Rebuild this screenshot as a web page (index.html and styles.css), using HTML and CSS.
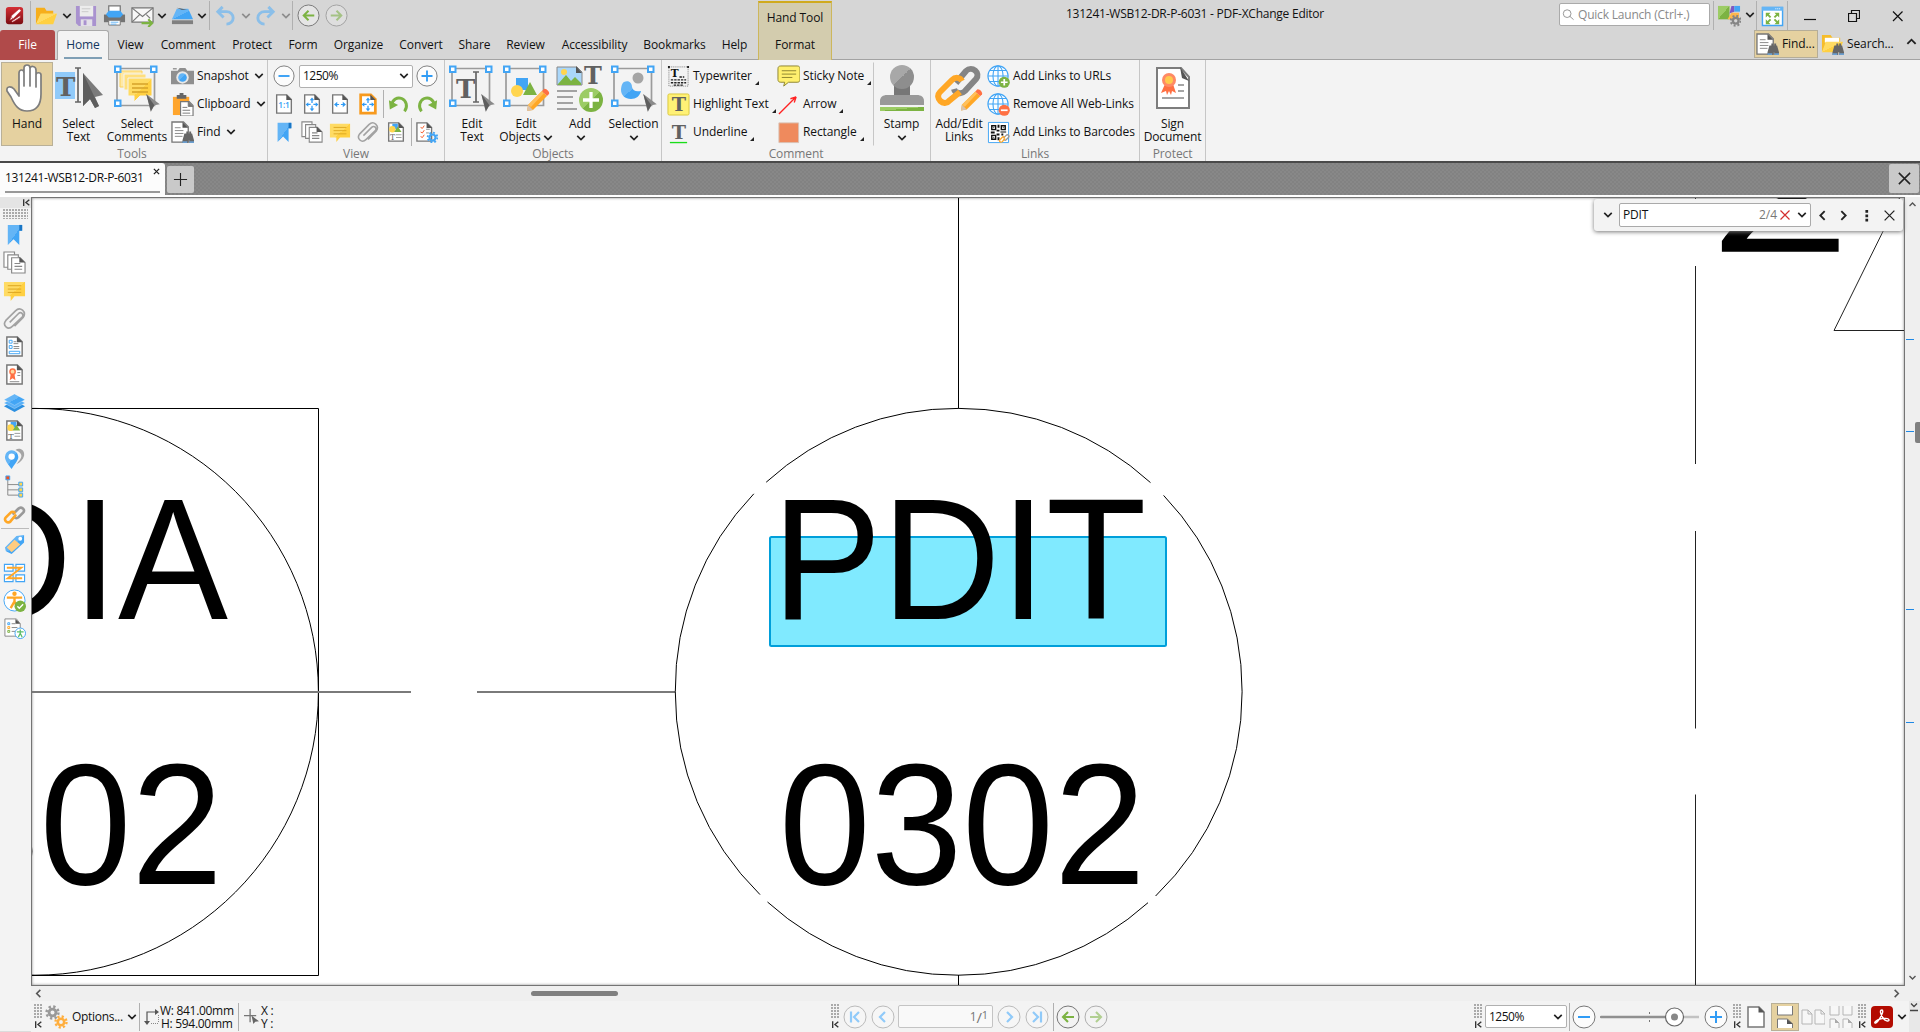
FILE: index.html
```html
<!DOCTYPE html>
<html lang="en">
<head>
<meta charset="utf-8">
<title>131241-WSB12-DR-P-6031 - PDF-XChange Editor</title>
<link rel="stylesheet" href="styles.css">
</head>
<body>
<svg class="defs" aria-hidden="true">
<defs>
<linearGradient id="gblue" x1="0" y1="0" x2="1" y2="1"><stop offset=".5" stop-color="#64b5f6"/><stop offset=".5" stop-color="#42a5f5"/></linearGradient>
<linearGradient id="gyel" x1="0" y1="0" x2="1" y2="1"><stop offset=".5" stop-color="#ffdb63"/><stop offset=".5" stop-color="#ffd042"/></linearGradient>
<linearGradient id="gred" x1="0" y1="0" x2="0" y2="1"><stop offset="0" stop-color="#d62f35"/><stop offset="1" stop-color="#7b0d12"/></linearGradient>
<linearGradient id="ggray" x1="0" y1="0" x2="1" y2="1"><stop offset=".5" stop-color="#a8a8a8"/><stop offset=".5" stop-color="#8e8e8e"/></linearGradient>
<linearGradient id="ggreen" x1="0" y1="0" x2="1" y2="1"><stop offset=".5" stop-color="#9ccc65"/><stop offset=".5" stop-color="#7cb342"/></linearGradient>
<symbol id="chev" viewBox="0 0 8 8"><path d="M1 2.300l3 3 3-3" fill="none" stroke="currentColor" stroke-width="1.350"/></symbol>
<symbol id="page" viewBox="0 0 24 24"><path d="M4 2h11l5 5v15H4z" fill="#fff" stroke="#777" stroke-width="1.500"/><path d="M14.500 1.500v6h6z" fill="#555"/></symbol>
<symbol id="bino" viewBox="0 0 24 24"><path d="M12 20l2-7h2v-2h2v2h1v-2h2v2h1l2 7v3h-5v-3h-1v3h-6z" fill="#666"/><path d="M12 21h5v2h-5zM19 21h5v2h-5z" fill="#6b9fd0"/></symbol>
<symbol id="app" viewBox="0 0 24 24"><rect x="3" y="3" width="18" height="18" rx="3" fill="url(#gred)"/><path d="M7 17l2-5 8-7 2 2-8 8zM9 18l9-6v2l-8 5zM8 13l3 3" fill="#fff" stroke="#b3262b" stroke-width=".6"/></symbol>
<symbol id="folder" viewBox="0 0 24 24"><path d="M1 21V4h9l2 3h7v4H6z" fill="#f6ae1b"/><path d="M1 21l5-11h17l-4 11z" fill="url(#gyel)"/></symbol>
<symbol id="save" viewBox="0 0 24 24"><path d="M1 2h21v21H4l-3-3z" fill="#a992cf"/><path d="M5 2h14v11H5z" fill="#ececec"/><path d="M6 16h12v7H6z" fill="#e3e0e8"/><path d="M9 17h3v5H9z" fill="#a992cf"/><path d="M7 5h9M7 8h7" stroke="#c9c9c9"/></symbol>
<symbol id="print" viewBox="0 0 24 24"><path d="M6 9V2h12v7" fill="#fff" stroke="#777" stroke-width="1.300"/><path d="M1 11h22v8H1z" fill="#737373"/><path d="M3 11l3-4h12l3 4-3 3H6z" fill="#42a5f5"/><path d="M6 17h12v5H6z" fill="#fff" stroke="#777"/><path d="M8 19h8M8 21h6" stroke="#64b5f6"/></symbol>
<symbol id="mail" viewBox="0 0 24 24"><path d="M1 4h22v15H1z" fill="#f7f7f7" stroke="#777" stroke-width="1.300"/><path d="M1 4l11 9L23 4M1 19l8-8M16 11l4 4" fill="none" stroke="#777" stroke-width="1.200"/><path d="M11 20h10M18 16l4 4-4 4" fill="none" stroke="#7cb342" stroke-width="2.200"/></symbol>
<symbol id="scan" viewBox="0 0 24 24"><path d="M6 5h12l5 11H1z" fill="url(#gblue)"/><path d="M6 4l5 2h6z" fill="#555"/><path d="M1 17h22v4H1z" fill="#808080"/></symbol>
<symbol id="undo" viewBox="0 0 24 24"><path d="M9 3L4 8l6 6M4 8h9c4 0 7 3 7 6.500S17 21 13 21" fill="none" stroke="#8bbfe9" stroke-width="3"/></symbol>
<symbol id="back" viewBox="0 0 24 24"><circle cx="12" cy="12" r="11" fill="#f3f3f3" fill-opacity=".5" stroke="#777"/><path d="M18 12H7M12 7l-5 5 5 5" fill="none" stroke="#7cb342" stroke-width="2.100"/></symbol>
<symbol id="fwd" viewBox="0 0 24 24"><g opacity=".55"><circle cx="12" cy="12" r="11" fill="#f3f3f3" fill-opacity=".5" stroke="#777"/><path d="M6 12h11M12 7l5 5-5 5" fill="none" stroke="#7cb342" stroke-width="2.100"/></g></symbol>
<symbol id="prev" viewBox="0 0 24 24"><circle cx="12" cy="12" r="11" fill="#f6f6f6" stroke="#bbb"/><path d="M14 7l-5 5 5 5" fill="none" stroke="#90caf9" stroke-width="2.200"/></symbol>
<symbol id="first" viewBox="0 0 24 24"><circle cx="12" cy="12" r="11" fill="#f6f6f6" stroke="#bbb"/><path d="M16 7l-5 5 5 5M8 6.500v11" fill="none" stroke="#90caf9" stroke-width="2.200"/></symbol>
<symbol id="minus" viewBox="0 0 24 24"><circle cx="12" cy="12" r="11" fill="#fcfcfc" stroke="#777"/><path d="M6 12h12" stroke="#2f9bf5" stroke-width="2"/></symbol>
<symbol id="plus" viewBox="0 0 24 24"><circle cx="12" cy="12" r="11" fill="#fcfcfc" stroke="#777"/><path d="M6 12h12M12 6v12" stroke="#2f9bf5" stroke-width="2"/></symbol>
<symbol id="camera" viewBox="0 0 24 24"><path d="M0 6h7l2-3h6l2 3h7v14H0z" fill="#8f8f8f"/><circle cx="12" cy="13" r="6.500" fill="#e8e8e8"/><circle cx="12" cy="13" r="4.500" fill="url(#gblue)"/><path d="M2 4h4" stroke="#666"/></symbol>
<symbol id="clipb" viewBox="0 0 24 24"><path d="M2 4h17v19H2z" fill="#ffa52c"/><path d="M6 6V2h3V0h4v2h3v4z" fill="#666"/><path d="M10 9h9l4 4v11H10z" fill="#fff" stroke="#777" stroke-width="1.200"/><path d="M18 9v5h5zM12 15h5M12 18h8M12 21h8" stroke="#777" fill="#777"/></symbol>
<symbol id="find" viewBox="0 0 24 24"><path d="M1 1h12l5 5v16H1z" fill="#fff" stroke="#777" stroke-width="1.400"/><path d="M12 1v6h6z" fill="#555"/><path d="M4 7h6M4 10h9M4 13h9M4 16h8" stroke="#888"/><use href="#bino"/></symbol>
<symbol id="fsearch" viewBox="0 0 24 24"><path d="M1 20V2h9l2 3h8v5H6z" fill="#f6bd2b"/><path d="M4 5h15v5H4z" fill="#fff"/><path d="M1 20l4-11h18l-4 11z" fill="url(#gyel)"/><use href="#bino"/></symbol>
<symbol id="bookm" viewBox="0 0 24 24"><path d="M5 2h15v6h-3v15l-6-6-6 6z" fill="url(#gblue)"/><path d="M17 2h3v6h-3z" fill="#1976c5"/></symbol>
<symbol id="pages" viewBox="0 0 24 24"><g fill="#fff" stroke="#888" stroke-width="1.200"><path d="M1 1h11v16H1z"/><path d="M5 4h11v15H5z"/><path d="M9 7h9l5 5v11H9z"/><path d="M12 13h6M12 16h8M12 19h8"/></g><path d="M17 6v6h6z" fill="#555"/></symbol>
<symbol id="note" viewBox="0 0 24 24"><path d="M1 3h22v15H12l-4 5v-5H1z" fill="url(#gyel)"/><path d="M5 7h14M5 10.500h14M5 14h14" stroke="#dba520"/></symbol>
<symbol id="clip" viewBox="0 0 24 24"><path d="M7 16L16 7c3-3 6 1 4 3.500L10 20c-5 5-11-1-7-6L13 4c5-5 12 1 8 7l-9 9" fill="none" stroke="#a2a2a2" stroke-width="1.700"/></symbol>
<symbol id="shapes" viewBox="0 0 24 24"><use href="#page"/><path d="M8 3h6v6H8z" fill="#42a5f5"/><circle cx="8" cy="9" r="3.500" fill="#ffd54f"/><path d="M10 12l4-6 4 6z" fill="#7cb342"/><text x="5.500" y="20.500" class="ict thin" font-size="8.500">T</text><path d="M12 15h6M12 18h6" stroke="#999"/></symbol>
<symbol id="form" viewBox="0 0 24 24"><use href="#page"/><path d="M6.500 5.500h3v3h-3zM6.500 11h3v3h-3zM6.500 17h11v2.500h-11z" fill="#fff" stroke="#42a5f5"/><path d="M11 7h3M11 9h5M11 12h6M11 14h6" stroke="#888"/></symbol>
<symbol id="cert" viewBox="0 0 24 24"><use href="#page"/><path d="M8 12l-1 6 3-2 3 2-1-6z" fill="#ff7043"/><circle cx="10" cy="9" r="3.500" fill="#ff7043"/><circle cx="10" cy="9" r="2" fill="#ffd9a0"/><path d="M15 10h3M15 13h3M7 19.500h10" stroke="#888"/></symbol>
<symbol id="layers" viewBox="0 0 24 24"><path d="M1 16l11 6 11-6-11-6z" fill="#2b8fe0"/><path d="M1 12.500l11 6 11-6-11-6z" fill="#59b0f7" stroke="#fff" stroke-width=".3"/><path d="M1 9l11 6 11-6-11-6z" fill="url(#gblue)" stroke="#fff" stroke-width=".3"/></symbol>
<symbol id="pins" viewBox="0 0 24 24"><path d="M13 3c4-3 10 0 9 6-1 4-4 7-8 9 3-4 6-7 5-10-1-3-4-4-6-5z" fill="#a5a5a5"/><path d="M9 23C5 18 2 14 2 10.500a7 7 0 0114 0C16 14 12 18 9 23z" fill="url(#gblue)"/><circle cx="9" cy="10" r="3.300" fill="#fff"/></symbol>
<symbol id="tree" viewBox="0 0 24 24"><path d="M5 5v16h12M5 10h12M5 15.500h12" fill="none" stroke="#888"/><path d="M3 1h4v4H3z" fill="#f4511e" stroke="#42a5f5"/><path d="M16.500 7.500h4v4h-4zM16.500 13.500h4v4h-4zM16.500 19h4v4h-4z" fill="#ffd54f" stroke="#42a5f5"/></symbol>
<symbol id="chain" viewBox="0 0 24 24"><g fill="none" stroke-width="2.800" stroke-linecap="round"><path d="M11 11l5-5c3-3 8 1 5 4l-5 5c-1 1-3 1-4 0" stroke="#999"/><path d="M13 13l-5 6c-3 3-8-1-5-4l5-5c1-1 3-1 4 0" stroke="#ffa726"/></g></symbol>
<symbol id="tag" viewBox="0 0 24 24"><path d="M2 15L14 3l8-1v8L9 22l-6-3z" fill="url(#gblue)"/><path d="M4 15l8-8 6 5-9 8z" fill="#ffcc80"/><circle cx="18" cy="6" r="2" fill="#fff"/></symbol>
<symbol id="order" viewBox="0 0 24 24"><path d="M1.500 3.500h9v7h-9zM13.500 3.500h9v7h-9zM1.500 14.500h9v7h-9zM13.500 14.500h9v7h-9z" fill="#fff" stroke="#42a5f5" stroke-width="1.200"/><path d="M4 7h15L5 18h15" fill="none" stroke="#ffa726" stroke-width="2"/></symbol>
<symbol id="access" viewBox="0 0 24 24"><circle cx="12" cy="12" r="11" fill="#fff" stroke="#42a5f5"/><circle cx="12" cy="5" r="2.300" fill="#ffa726"/><path d="M4 9h16M12 9v5M12 13l-4 7M12 13l3 6" stroke="#ffa726" stroke-width="2.500"/><circle cx="18" cy="18" r="6" fill="#7cb342"/><path d="M15 18l2 2 4-4" fill="none" stroke="#fff" stroke-width="1.500"/></symbol>
<symbol id="docacc" viewBox="0 0 24 24"><path d="M2 2h12l4 5v13H2z" fill="#fff" stroke="#888"/><path d="M13 2v5h5z" fill="#555"/><path d="M5 6h2v2H5z" fill="none" stroke="#42a5f5"/><path d="M5 10h2v2H5z" fill="none" stroke="#ffa726"/><path d="M5 14h2v2H5z" fill="none" stroke="#7cb342"/><path d="M9 7h4M9 11h6M9 15h4" stroke="#888"/><circle cx="18" cy="17" r="5.500" fill="#fff" stroke="#42a5f5"/><path d="M14.500 15.500h7M18 13v5M18 17l-2 4M18 17l2 4" stroke="#5bbd6b" stroke-width="1.300"/></symbol>
<symbol id="p11" viewBox="0 0 24 24"><use href="#page"/><text x="5.800" y="16" font-size="9" fill="#2f9bf5" class="ins">1:1</text></symbol>
<symbol id="arr4" viewBox="0 0 24 24"><path d="M12 5l2.500 3h-5zM12 20l2.500-3h-5zM5 12.500l3-2.500v5zM19 12.500l-3-2.500v5zM11.300 8h1.400v3h-1.400zM11.300 14h1.400v3h-1.400zM8 11.800h2.500v1.400H8zM13.500 11.800H16v1.400h-2.500z" fill="#2f9bf5"/></symbol>
<symbol id="pfit" viewBox="0 0 24 24"><use href="#page"/><use href="#arr4"/></symbol>
<symbol id="pwid" viewBox="0 0 24 24"><use href="#page"/><path d="M5.500 12.500L9 9.500v6zM18.500 12.500L15 9.500v6zM9 12h2v1H9zM13 12h2v1h-2z" fill="#2f9bf5"/></symbol>
<symbol id="pvis" viewBox="0 0 24 24"><path d="M4 2h11l5 5v15H4z" fill="#fff" stroke="#f79a1e" stroke-width="3"/><path d="M14.500 1.500v6h6z" fill="#555"/><use href="#arr4"/></symbol>
<symbol id="rot" viewBox="0 0 24 24"><path d="M4 13c1-6 6-9 11-7 5 2 7 9 3 14" fill="none" stroke="#7cb342" stroke-width="3.200"/><path d="M1 8l1 10 9-5z" fill="#7cb342"/></symbol>
<symbol id="pset" viewBox="0 0 24 24"><use href="#page" x="-3"/><path d="M5 7l2 1 2-3M5 12l2 1 2-3M5 17l2 1 2-3" fill="none" stroke="#f4511e"/><path d="M11 9h4M11 13h3" stroke="#888"/><circle cx="18" cy="18" r="3.300" fill="none" stroke="#42a5f5" stroke-width="2.400"/><circle cx="18" cy="18" r="5.300" fill="none" stroke="#42a5f5" stroke-width="2" stroke-dasharray="2 2.160"/></symbol>
<symbol id="gear" viewBox="0 0 24 24"><circle cx="12" cy="12" r="5.500" fill="none" stroke="currentColor" stroke-width="4.500"/><circle cx="12" cy="12" r="9.500" fill="none" stroke="currentColor" stroke-width="4" stroke-dasharray="3.700 3.760"/></symbol>
<symbol id="cursor" viewBox="0 0 16 20"><path d="M0 0l15 11.500-6 1L5 20z" fill="#8a8a8a"/><path d="M0 0l9 12.500L5 19z" fill="#5e5e5e"/></symbol>
<symbol id="cursorbig" viewBox="0 0 20 36"><path d="M0 0l20 22-8 2 4 9-4 2-5-9-7 7z" fill="#7b7b7b"/><path d="M0 0l11 23 5 10-4 2-5-9-7 7z" fill="#5e5e5e"/></symbol>
<symbol id="frame" viewBox="0 0 48 48"><path d="M4 4.500h37.500v37H4z" fill="none" stroke="#9b9b9b" stroke-width="1.700"/></symbol>
<symbol id="knobs" viewBox="0 0 48 48"><path d="M2 2.500h5.500v5.500H2zM38 2.500h5.500v5.500H38zM2 36.500h5.500V42H2z" fill="#fff" stroke="#42a5f5" stroke-width="2"/></symbol>
<symbol id="pencil" viewBox="0 0 24 24"><path d="M1 23l1-6L16 3l5 5L7 22z" fill="#ffa726"/><path d="M2 17L16 3l2 2L5 19z" fill="#ffc05c"/><path d="M1 23l1-6 5 5z" fill="#d8c3ae"/><path d="M16 3l2-2c2-1 6 3 5 5l-2 2z" fill="#ff7043"/></symbol>
<symbol id="hand" viewBox="0 0 48 48"><path d="M16 26V9c0-4 5-4 5 0v13V4c0-4 6-4 6 0v18V5c0-4 6-3 6 1v17V11c0-3 5-3 5 0v19c0 12-5 17-14 17-8 0-12-5-16-14l-4-6c-1-5 4-5 7-2l5 7z" fill="#fff" stroke="#7d7d7d" stroke-width="1.700" stroke-linejoin="round"/></symbol>
<symbol id="seltext" viewBox="0 0 48 48"><path d="M0 8h20v27H0z" fill="#90caf9"/><text x="1" y="32" font-size="26" class="ict">T</text><path d="M20 4h6M20 38h6M23 4v34" stroke="#666" stroke-width="1.700"/><use href="#cursorbig" x="28" y="9" width="20" height="36"/></symbol>
<symbol id="selcom" viewBox="0 0 48 48"><use href="#frame"/><path d="M7 7h22v16H7z" fill="#ffe9a6" stroke="#fbd25a"/><path d="M11 10h22v16H11z" fill="#ffdf7d" stroke="#f3f3f3"/><path d="M15 14h24v18H27l-6 6v-6h-6z" fill="url(#gyel)" stroke="#f3f3f3"/><path d="M19 20h16M19 24h16M19 28h16" stroke="#d6a32a" stroke-width="1.300"/><use href="#knobs"/><use href="#cursor" x="33" y="30" width="15" height="18"/></symbol>
<symbol id="edtext" viewBox="0 0 48 48"><use href="#frame"/><text x="8" y="34" font-size="26" class="ict">T</text><path d="M25 8h6M25 38h6M28 8v30" stroke="#666" stroke-width="1.700"/><use href="#knobs"/><use href="#cursor" x="33" y="30" width="15" height="18"/></symbol>
<symbol id="edobj" viewBox="0 0 48 48"><use href="#frame"/><path d="M14 14h12v12H14z" fill="#42a5f5"/><circle cx="15" cy="27" r="6" fill="#ffd54f"/><path d="M21 31l7-13 7 13z" fill="#7cb342"/><use href="#knobs"/><use href="#pencil" x="24" y="24" width="24" height="24"/></symbol>
<symbol id="addobj" viewBox="0 0 48 48"><path d="M1 3h20l5 5v13H1z" fill="#aad7fa" stroke="#888"/><circle cx="8" cy="8" r="3" fill="#ffd54f"/><path d="M2 20l8-9 5 6 4-4 6 6v2H2z" fill="#7cb342"/><path d="M20 2v7h6z" fill="#555"/><text x="28" y="20" font-size="24" class="ict">T</text><path d="M1 27h20M1 33h16M1 39h16M1 45h20" stroke="#888" stroke-width="1.700"/><circle cx="35" cy="36" r="12" fill="url(#ggreen)"/><path d="M27 36h16M35 28v16" stroke="#fff" stroke-width="3.300"/></symbol>
<symbol id="select" viewBox="0 0 48 48"><use href="#frame"/><circle cx="28" cy="14" r="5.500" fill="#a5a5a5"/><path d="M14 18c5-2 8 1 8 5 1 4 4 5 9 4-1 5-5 8-10 8-6 0-10-4-10-9 0-3 1-7 3-8z" fill="url(#gblue)"/><use href="#knobs"/><use href="#cursor" x="33" y="30" width="15" height="18"/></symbol>
<symbol id="stamp" viewBox="0 0 48 48"><path d="M16 20h16v14H16z" fill="#777"/><circle cx="24" cy="13" r="12" fill="url(#ggray)"/><path d="M2 41v-4c0-4 3-6 7-6h30c4 0 7 2 7 6v4z" fill="#999"/><path d="M2 43h44v4H2z" fill="url(#ggreen)"/></symbol>
<symbol id="links" viewBox="0 0 48 48"><g fill="none" stroke-width="6"><path d="M21 19l10-12c6-6 15 2 10 8L30 27c-4 4-10 2-11-2" stroke="#858585"/><path d="M27 17c-2-4-7-4-10-1L5 28c-6 6 4 15 9 9l11-9" stroke="#ffa726"/></g><use href="#pencil" x="25" y="24" width="23" height="24"/></symbol>
<symbol id="sign" viewBox="0 0 48 48"><path d="M8 4h24l8 9v31H8z" fill="#fff" stroke="#7d7d7d" stroke-width="2"/><path d="M31 3l9 14-7-3z" fill="#555"/><path d="M16 20l-4 9 5-2 1 4 2-4 2 4 1-4 4 2-3-9z" fill="#ff7043"/><circle cx="20" cy="16" r="7" fill="#ff8a65"/><circle cx="20" cy="16" r="4" fill="#ffc94d"/><path d="M29 21h6M29 27h6M13 34h22" stroke="#888" stroke-width="1.700"/></symbol>
<symbol id="globe" viewBox="0 0 24 24"><g fill="#fafdff" stroke="#42a5f5" stroke-width="1.200"><circle cx="12" cy="12" r="11"/><ellipse cx="12" cy="12" rx="5.500" ry="11"/><path d="M1 12h22M3 6h18M3 18h18M12 1v22"/></g></symbol>
<symbol id="gadd" viewBox="0 0 24 24"><use href="#globe" width="23" height="23"/><circle cx="18" cy="18" r="5.800" fill="#7cb342"/><path d="M14.500 18h7M18 14.500v7" stroke="#fff" stroke-width="1.800"/></symbol>
<symbol id="grem" viewBox="0 0 24 24"><use href="#globe" width="23" height="23"/><circle cx="18" cy="18" r="5.800" fill="#ff7043"/><path d="M14.500 18h7" stroke="#fff" stroke-width="1.800"/></symbol>
<symbol id="qr" viewBox="0 0 24 24"><path d="M1.500 1.500h21v21h-21z" fill="#fff" stroke="#42a5f5"/><path d="M5 5h4v4H5zM15 5h4v4h-4zM5 15h4v4H5z" fill="#fff" stroke="#111" stroke-width="1.500"/><path d="M6.500 6.500h1v1h-1zM16.500 6.500h1v1h-1zM6.500 16.500h1v1h-1zM11 4h2v3h-2zM10 9h3v2h-3zM4 11h4v2H4zM14 11h6v1h-6zM10 13h3v2h-3zM15 13h2v2h-2zM11 17h2v3h-2z" fill="#111"/><use href="#chain" x="12" y="12" width="12" height="12"/></symbol>
<symbol id="type" viewBox="0 0 24 24"><path d="M2 2h20v20H2z" fill="none" stroke="#777" stroke-dasharray="1 1"/><path d="M1 1h2v2H1zM21 1h2v2h-2z" fill="#222"/><text x="4" y="13" font-size="11" font-weight="bold" class="ict blk">T</text><path d="M13 12.500h5M4 15.500h16M4 18.500h16M7 21h10" stroke="#222" stroke-width="1.500" stroke-dasharray="2.500 1"/></symbol>
<symbol id="hilite" viewBox="0 0 24 24"><rect x="1" y="1" width="22" height="22" rx="1.500" fill="#fff176" stroke="#d9c83e"/><text x="5" y="19" font-size="20" class="ict">T</text></symbol>
<symbol id="under" viewBox="0 0 24 24"><text x="5" y="19" font-size="20" class="ict">T</text><path d="M3 22.500h18" stroke="#19dd19" stroke-width="1.400"/></symbol>
<symbol id="sticky" viewBox="0 0 24 24"><path d="M4 1h17c2 0 3 1 3 3v11c0 2-1 3-3 3h-9l-5 4 1-4H4c-2 0-3-1-3-3V4c0-2 1-3 3-3z" fill="#fff06e" stroke="#8c8430"/><path d="M5 6h15M5 9.500h15M5 13h11" stroke="#8c8430"/></symbol>
<symbol id="arrow" viewBox="0 0 24 24"><path d="M2 22L20 4M20 4l-6 2M20 4l-2 6" fill="none" stroke="#f22" stroke-width="1.400"/></symbol>
<symbol id="rect" viewBox="0 0 24 24"><path d="M2 2h20.500v20.500H2z" fill="#ef8a5d" stroke="#d9bfb2"/></symbol>
<symbol id="x" viewBox="0 0 12 12"><path d="M1.500 1.500l9 9M10.500 1.500l-9 9" stroke="currentColor" stroke-width="1.200"/></symbol>
<symbol id="xb" viewBox="0 0 12 12"><path d="M1.500 1.500l9 9M10.500 1.500l-9 9" stroke="currentColor" stroke-width="2.200"/></symbol>
<symbol id="lch" viewBox="0 0 12 12"><path d="M8 2L4 6l4 4" fill="none" stroke="currentColor" stroke-width="1.700"/></symbol>
<symbol id="collapse" viewBox="0 0 8 8"><path d="M1.500 1v6M6.500 1.500L3.500 4l3 2.500" fill="none" stroke="#333" stroke-width="1.200"/></symbol>
<symbol id="themes" viewBox="0 0 24 24"><path d="M0 2h12v14H0z" fill="url(#ggreen)"/><path d="M14 2h3v6l-5 2z" fill="#7e57c2"/><path d="M17 2h6v6h-6z" fill="#42a5f5"/><path d="M10 16l4-7h8v7z" fill="#ffb74d"/><g color="#858585"><use href="#gear" x="12" y="11" width="13" height="13"/></g></symbol>
<symbol id="full" viewBox="0 0 24 24"><path d="M1.500 3.500h21v19h-21z" fill="#fff" stroke="#42a5f5" stroke-width="1.500"/><path d="M1 3h22v4H1z" fill="#64b5f6"/><path d="M15 5h6" stroke="#fff" stroke-dasharray="1 1"/><path d="M5 9h5l-5 5zM19 9h-5l5 5zM5 21h5l-5-5zM19 21h-5l5-5z" fill="#7cb342"/><path d="M6 10l4 4M18 10l-4 4M6 20l4-4M18 20l-4-4" stroke="#7cb342" stroke-width="2"/></symbol>
</defs>
</svg>

<header class="header">
 <div class="titlebar">
  <div class="quick">
   <svg><use href="#app"/></svg><i class="sep"></i><svg><use href="#folder"/></svg><svg class="chev"><use href="#chev"/></svg>
   <svg><use href="#save"/></svg><svg><use href="#print"/></svg><svg><use href="#mail"/></svg><svg class="chev"><use href="#chev"/></svg>
   <svg><use href="#scan"/></svg><svg class="chev"><use href="#chev"/></svg><i class="sep"></i><svg><use href="#undo"/></svg><svg class="chev dim"><use href="#chev"/></svg>
   <svg class="flip"><use href="#undo"/></svg><svg class="chev dim"><use href="#chev"/></svg><i class="sep"></i><svg><use href="#back"/></svg><svg><use href="#fwd"/></svg>
  </div>
  <div class="title">131241-WSB12-DR-P-6031 - PDF-XChange Editor</div>
  <div class="quicklaunch"><svg viewBox="0 0 14 14"><circle cx="6" cy="6" r="4.500"/><path d="M9 9l4.500 4"/></svg><span>Quick Launch (Ctrl+.)</span></div>
  <div class="wintools"><i class="sep"></i><svg><use href="#themes"/></svg><svg class="chev"><use href="#chev"/></svg><i class="sep"></i><svg><use href="#full"/></svg><i class="sep"></i>
   <svg class="wb" viewBox="0 0 12 12"><path d="M0 9.500h12"/></svg><svg class="wb" viewBox="0 0 12 12"><path d="M.5 3.500h8v8h-8zM3.500 3V.5h8v8H9"/></svg><svg class="wb" viewBox="0 0 12 12"><path d="M1 1.500l9.500 9.500M10.500 1.500L1 11"/></svg>
  </div>
 </div>
 <nav class="tabs">
  <span class="file">File</span><span class="home">Home</span><span>View</span><span>Comment</span><span>Protect</span><span>Form</span><span>Organize</span><span>Convert</span><span>Share</span><span>Review</span><span>Accessibility</span><span>Bookmarks</span><span>Help</span>
  <div class="context"><span>Hand Tool</span><span>Format</span></div>
  <div class="findbtn on"><svg><use href="#find"/></svg>Find...</div>
  <div class="findbtn"><svg><use href="#fsearch"/></svg>Search...</div>
  <svg class="chev up"><use href="#chev"/></svg>
 </nav>
</header>

<section class="ribbon">
 <div class="group g-tools"><div class="body">
  <div class="big on"><svg><use href="#hand"/></svg><b>Hand</b></div>
  <div class="big"><svg><use href="#seltext"/></svg><b>Select<br>Text</b></div>
  <div class="big"><svg><use href="#selcom"/></svg><b>Select<br>Comments</b></div>
  <div class="list">
   <div><svg><use href="#camera"/></svg>Snapshot<svg class="chev"><use href="#chev"/></svg></div>
   <div><svg><use href="#clipb"/></svg>Clipboard<svg class="chev"><use href="#chev"/></svg></div>
   <div><svg><use href="#find"/></svg>Find<svg class="chev"><use href="#chev"/></svg></div>
  </div></div><h6>Tools</h6></div>
 <div class="group g-view"><div class="body rows">
  <div class="row zoomrow"><svg><use href="#minus"/></svg><div class="combo"><span>1250%</span><svg class="chev"><use href="#chev"/></svg></div><svg><use href="#plus"/></svg></div>
  <div class="row"><svg><use href="#p11"/></svg><svg><use href="#pfit"/></svg><svg><use href="#pwid"/></svg><svg><use href="#pvis"/></svg><i class="sep"></i><svg><use href="#rot"/></svg><svg class="flip"><use href="#rot"/></svg></div>
  <div class="row"><svg><use href="#bookm"/></svg><svg><use href="#pages"/></svg><svg><use href="#note"/></svg><svg><use href="#clip"/></svg><svg><use href="#shapes"/></svg><i class="sep"></i><svg><use href="#pset"/></svg></div>
  </div><h6>View</h6></div>
 <div class="group g-objects"><div class="body">
  <div class="big"><svg><use href="#edtext"/></svg><b>Edit<br>Text</b></div>
  <div class="big"><svg><use href="#edobj"/></svg><b>Edit<br>Objects<svg class="chev"><use href="#chev"/></svg></b></div>
  <div class="big"><svg><use href="#addobj"/></svg><b>Add<br><svg class="chev"><use href="#chev"/></svg></b></div>
  <div class="big"><svg><use href="#select"/></svg><b>Selection<br><svg class="chev"><use href="#chev"/></svg></b></div>
  </div><h6>Objects</h6></div>
 <div class="group g-comment"><div class="body">
  <div class="list">
   <div><svg><use href="#type"/></svg>Typewriter<i class="corner"></i></div>
   <div><svg><use href="#hilite"/></svg>Highlight Text<i class="corner"></i></div>
   <div><svg><use href="#under"/></svg>Underline<i class="corner"></i></div>
  </div>
  <div class="list">
   <div><svg><use href="#sticky"/></svg>Sticky Note<i class="corner"></i></div>
   <div><svg><use href="#arrow"/></svg>Arrow<i class="corner"></i></div>
   <div><svg><use href="#rect"/></svg>Rectangle<i class="corner"></i></div>
  </div>
  <div class="big"><svg><use href="#stamp"/></svg><b>Stamp<br><svg class="chev"><use href="#chev"/></svg></b></div>
  </div><h6>Comment</h6></div>
 <div class="group g-links"><div class="body">
  <div class="big"><svg><use href="#links"/></svg><b>Add/Edit<br>Links</b></div>
  <div class="list">
   <div><svg><use href="#gadd"/></svg>Add Links to URLs</div>
   <div><svg><use href="#grem"/></svg>Remove All Web-Links</div>
   <div><svg><use href="#qr"/></svg>Add Links to Barcodes</div>
  </div></div><h6>Links</h6></div>
 <div class="group g-protect"><div class="body">
  <div class="big"><svg><use href="#sign"/></svg><b>Sign<br>Document</b></div>
  </div><h6>Protect</h6></div>
</section>

<div class="doctabs">
 <div class="doctab"><span>131241-WSB12-DR-P-6031</span><svg><use href="#xb"/></svg></div>
 <div class="tabbtn"><svg viewBox="0 0 16 16"><path d="M8 1v14M1 8h14" stroke="#222" stroke-width="1.200"/></svg></div>
 <div class="tabbtn close"><svg><use href="#x"/></svg></div>
</div>

<main class="main">
 <aside class="side">
  <div class="collapse"><svg><use href="#collapse"/></svg></div><div class="dots"></div>
  <svg><use href="#bookm"/></svg><svg><use href="#pages"/></svg><svg><use href="#note"/></svg><svg><use href="#clip"/></svg><svg><use href="#form"/></svg><svg><use href="#cert"/></svg><svg><use href="#layers"/></svg><svg><use href="#shapes"/></svg><svg><use href="#pins"/></svg><svg><use href="#tree"/></svg><svg><use href="#chain"/></svg>
  <hr>
  <svg><use href="#tag"/></svg><svg><use href="#order"/></svg><svg><use href="#access"/></svg><svg><use href="#docacc"/></svg>
 </aside>
 <div class="work">
  <div class="viewrow">
   <div class="canvas">
    <svg class="drawing" viewBox="32 198 1872 787">
     <g fill="none" stroke="#000" stroke-width="1">
      <path d="M958.500 198V408.500M958.500 975V985"/>
      <circle cx="35" cy="691.800" r="283.400"/>
      <path d="M32 408.500H318.500V975.500H32"/>
      <path d="M32 692H411M477 692H675" stroke="#7a7a7a" stroke-width="2"/>
      <g>
       <path d="M766.200 482.200A283.400 283.400 0 0 1 958.700 408.400A283.400 283.400 0 0 1 1150.500 482.600"/>
       <path d="M753.800 493.800A283.400 283.400 0 0 0 675.300 691.800A283.400 283.400 0 0 0 760 894.600"/>
       <path d="M1163.600 495.400A283.400 283.400 0 0 1 1242.100 691.800A283.400 283.400 0 0 1 1155.600 896"/>
       <path d="M767.500 902A283.400 283.400 0 0 0 958.700 975.200A283.400 283.400 0 0 0 1148 902.700"/>
      </g>
      <path d="M1695.500 198V200M1695.500 266V464M1695.500 531V728.500M1695.500 794.500V985M1899.500 198L1834 330.500H1904" stroke="#222"/>
     </g>
     <rect x="770" y="537" width="396" height="109" rx="1.500" fill="#80eaff" stroke="#009fda" stroke-width="2"/>
     <g class="cad" font-size="171.800">
      <text x="772" y="618.600" textLength="374.500" lengthAdjust="spacingAndGlyphs">PDIT</text>
      <text x="779.100" y="883.500" textLength="366.400" lengthAdjust="spacingAndGlyphs">0302</text>
      <text x="-47" y="618.600" textLength="275" lengthAdjust="spacingAndGlyphs">DIA</text>
      <text x="-143.500" y="883.500" textLength="366.400" lengthAdjust="spacingAndGlyphs">0302</text>
      <text x="1709" y="251.700" textLength="142.500" lengthAdjust="spacingAndGlyphs">2</text>
     </g>
    </svg>
    <div class="finder">
     <svg class="chev"><use href="#chev"/></svg>
     <div class="field"><span>PDIT</span><em>2/4</em><svg class="red"><use href="#x"/></svg><svg class="chev"><use href="#chev"/></svg></div>
     <svg><use href="#lch"/></svg><svg class="flip"><use href="#lch"/></svg>
     <svg viewBox="0 0 12 12"><path d="M5 1h2.500v2.500H5zM5 5h2.500v2.500H5zM5 9h2.500v2.500H5z" fill="#222"/></svg>
     <svg class="cl"><use href="#x"/></svg>
    </div>
   </div>
   <div class="vscroll"><svg viewBox="0 0 15 787"><path d="M4.500 8l3-3 3 3M4.500 778l3 3 3-3" fill="none" stroke="#555" stroke-width="1.400"/><path d="M1 141.500h8M1 233.500h8M1 411.500h8M1 524.500h8" stroke="#1e88e5"/><rect x="10" y="224" width="7" height="21" rx="2" fill="#808080"/></svg></div>
  </div>
  <div class="hscroll"><svg><use href="#lch"/></svg><i></i><svg class="flip"><use href="#lch"/></svg></div>
  <footer class="status">
   <div class="grip"><i class="dots"></i><svg><use href="#collapse"/></svg></div>
   <svg class="gears" viewBox="0 0 24 24"><g color="#999"><use href="#gear" width="15" height="15"/></g><g color="#ffae3d"><use href="#gear" x="9" y="10" width="14" height="14"/></g></svg>
   <span class="opt">Options...</span><svg class="chev"><use href="#chev"/></svg><i class="sep"></i>
   <svg class="dim1" viewBox="0 0 16 16"><path d="M3 14V3h10" fill="none" stroke="#555" stroke-width="1.200"/><path d="M11 0l4 3-4 3zM0 12l3 4 3-4z" fill="#555"/><path d="M7 14.500h8M14.500 6v8" stroke="#888" stroke-dasharray="1 1"/></svg>
   <div class="size"><span>W: 841.00mm</span><span>H: 594.00mm</span></div><i class="sep s2"></i>
   <svg class="cross" viewBox="0 0 16 16"><path d="M6.500 0v14M0 7h13" stroke="#777" stroke-width="1.400"/><path d="M8 7l8 6-4 .5L10 16z" fill="#666"/></svg>
   <div class="xy"><span>X :</span><span>Y :</span></div>
   <div class="grip mid"><i class="dots"></i><svg><use href="#collapse"/></svg></div>
   <svg class="ic"><use href="#first"/></svg><svg class="ic"><use href="#prev"/></svg>
   <div class="pageno"><span>1</span><i>/</i><sup>1</sup></div>
   <svg class="ic flip"><use href="#prev"/></svg><svg class="ic flip"><use href="#first"/></svg><i class="sep s3"></i><svg class="ic"><use href="#back"/></svg><svg class="ic"><use href="#fwd"/></svg>
   <div class="grip right"><i class="dots"></i><svg><use href="#collapse"/></svg></div>
   <div class="combo"><span>1250%</span><svg class="chev"><use href="#chev"/></svg></div><i class="sep s3"></i>
   <svg class="ic"><use href="#minus"/></svg>
   <svg class="slider" viewBox="0 0 100 24"><path d="M1 12h68" stroke="#909090" stroke-width="2.500" stroke-linecap="round"/><path d="M80 12h19" stroke="#c2c2c2" stroke-width="2.500"/><path d="M49.500 7v2M49.500 15v2" stroke="#777"/><circle cx="74.500" cy="12" r="9" fill="#fff" stroke="#666" stroke-width="1.200"/><circle cx="74.500" cy="12" r="3.500" fill="#888"/></svg>
   <svg class="ic"><use href="#plus"/></svg>
   <div class="grip g4"><i class="dots"></i><svg><use href="#collapse"/></svg></div>
   <svg class="ic pg"><use href="#page"/></svg>
   <div class="pageon"><svg viewBox="0 0 24 24"><path d="M4.500 1v9h15V1M4.500 23v-9h10l5 5v4" fill="#fff" stroke="#777"/><path d="M14 14v5h6z" fill="#555"/></svg></div>
   <svg class="ic two" viewBox="0 0 24 24"><path d="M1 5h6l4 4v10H1zM14 5h6l4 4v10H14zM7 5v4h4M20 5v4h4" fill="#f7f7f7" stroke="#b5b5b5"/></svg>
   <svg class="ic four" viewBox="0 0 24 24"><path d="M1 1v9h9V1M14 1v9h9V1M1 23v-9h5l4 4v5M14 23v-9h5l4 4v5" fill="#f7f7f7" stroke="#b5b5b5"/><path d="M6 14v4h4zM19 14v4h4z" fill="#aaa"/></svg>
   <div class="grip g5"><i class="dots"></i><svg><use href="#collapse"/></svg></div>
   <svg class="acro" viewBox="0 0 22 22"><rect width="22" height="22" rx="4" fill="#b30b00"/><path d="M11 4c-3 0-1 5 1 8s6 4 6 2-6-2-9-1-6 3-5 4 5-4 7-9c1-2 1-4 0-4z" fill="none" stroke="#fff" stroke-width="1.400"/></svg>
   <svg class="chev last"><use href="#chev"/></svg>
   <div class="edge"><svg viewBox="0 0 8 10"><path d="M1 1.500l3 3 3-3M0 8.500h8" fill="none" stroke="#444" stroke-width="1.300"/></svg></div>
  </footer>
 </div>
</main>
</body>
</html>
```
FILE: styles.css
```css
* { box-sizing: border-box; }
body { margin: 0; width: 1920px; height: 1032px; overflow: hidden; display: flex; flex-direction: column; background: #f3f3f3; color: #111; font: 12px/16px "Open Sans", "Noto Sans", sans-serif; letter-spacing: -.1px; white-space: nowrap; }
svg { display: block; width: 24px; height: 24px; flex: none; color: #222; }
.defs { position: absolute; width: 0; height: 0; }
.ict { font-family: "DejaVu Serif", "Liberation Serif", serif; fill: #616161; font-weight: bold; }
.ict.blk { fill: #111; }
.ict.thin { font-weight: normal; }
.ins { font-family: "Open Sans", sans-serif; font-weight: 600; }
.chev { width: 10px; height: 10px; }
.dim { opacity: .4; }
.flip { transform: scaleX(-1); }
.sep { width: 1px; background: #b0b0b0; flex: none; }

.header { height: 60px; flex: none; background: #d6d6d6; border-bottom: 1px solid #a3a3a3; }
.titlebar { height: 29px; display: grid; grid-template-columns: 1066px 493px 151px 1fr; }
.quick { display: grid; align-items: center; grid-template-columns: 25px 7px 25px 15px 24px 32px 24px 16px 25px 14px 1px 30px 11px 28px 13px 1px 30px 27px; padding: 1px 0 0 2px; justify-items: center; }
.quick svg:not(.chev) { width: 23px; height: 23px; }
.quick .sep { height: 29px; }
.title { padding-top: 6px; letter-spacing: -.24px; }
.quicklaunch { height: 23px; margin-top: 3px; background: #fff; border: 1px solid #aaa; border-radius: 2px; color: #8a8a8a; display: flex; align-items: center; gap: 4px; padding-left: 2px; letter-spacing: -.2px; }
.quicklaunch svg { width: 12px; height: 13px; fill: none; stroke: #888; }
.wintools { display: grid; grid-template-columns: 3px 28px 13px 1px 30px 1px 44px 43px 45px; margin-left: 2px; align-items: center; justify-items: center; }
.wintools svg:not(.chev):not(.wb) { width: 23px; height: 23px; }
.wintools .sep { height: 29px; }
.wintools .wb { width: 12px; height: 12px; fill: none; stroke: #111; stroke-width: 1.200; margin-top: 2px; }
.tabs { height: 30px; display: grid; grid-template-columns: 55px 54px 43px 72px 56px 46px 65px 60px 47px 55px 83px 77px 43px 76px 922px 64px 90px 1fr; position: relative; line-height: 29px; text-align: center; margin-top: 1px; }
.tabs .file { background: #b04a4a; color: #fff; border-radius: 3px 3px 0 0; }
.tabs .home { width: 52px; margin-left: 2px; background: #f3f3f3; border: 1px solid #a9a9a9; border-bottom: 0; border-radius: 3px 3px 0 0; color: #14375f; line-height: 27px; position: relative; }
.tabs .home::after { content: ""; position: absolute; left: 6px; right: 6px; bottom: 1px; height: 2px; background: #7f9fb5; }
.context { grid-column: 14; width: 74px; margin: -29px 0 0 2px; background: #d3ccae; border: 1px solid #cdb75c; border-width: 2px 1px 0; border-top-color: #d0aa1c; display: flex; flex-direction: column; }
.context span:first-child { line-height: 29px; }
.context span:last-child { line-height: 26px; }
.findbtn { display: flex; align-items: center; gap: 3px; padding-left: 2px; height: 28px; line-height: 26px; }
.findbtn:not(.on) { padding-left: 3px; }
.findbtn svg { width: 23px; height: 23px; }
.findbtn.on { grid-column: 16; background: #e5d1a0; border: 1px solid #b5ad98; padding-left: 1px; }
.tabs .up { transform: scaleY(-1); margin: 6px 0 0 -2px; width: 11px; height: 11px; }

.ribbon { height: 103px; flex: none; display: flex; border-bottom: 2px solid #4a4a4a; background: #f3f3f3; }
.group { border-right: 1px solid #c6c6c6; padding-top: 2px; }
.g-tools { width: 268px; } .g-view { width: 177px; } .g-objects { width: 217px; } .g-comment { width: 269px; } .g-links { width: 209px; } .g-protect { width: 66px; }
.group h6 { margin: 0; font: inherit; color: #777; text-align: center; line-height: 15px; }
.g-tools h6 { width: 264px; }
.body { height: 84px; display: grid; }
.big { display: flex; flex-direction: column; align-items: center; padding-top: 1px; text-align: center; height: 84px; border: 1px solid transparent; }
.big.on { background: #e5d1a0; border-color: #b9b097; }
.big > svg { width: 48px; height: 48px; }
.big b { font-weight: normal; line-height: 13px; margin-top: 5px; }
.big b .chev { display: inline-block; vertical-align: middle; margin-left: 2px; }
.list { display: grid; grid-template-rows: repeat(3, 28px); }
.list div { display: flex; align-items: center; gap: 3px; }
.list > div > svg:first-child { width: 23px; height: 23px; }
.list .chev { margin-left: 2px; }
.corner { border: 2px solid transparent; border-right-color: #222; border-bottom-color: #222; width: 4px; height: 4px; margin: 13px 0 0 0; }
.g-tools .body { grid-template-columns: 52px 51px 66px 1fr; padding-left: 1px; }
.g-tools .list { padding-left: 1px; }
.g-objects .body { grid-template-columns: 54px 54px 54px 53px; }
.g-comment .body { grid-template-columns: 110px 102px 57px; padding-left: 5px; }
.g-comment .big { border-left-color: #c6c6c6; margin-left: -6px; width: 57px; }
.g-links .body { grid-template-columns: 56px 1fr; }
.g-protect .body { grid-template-columns: 65px; }
.rows { grid-template-rows: repeat(3, 28px); padding-left: 2px; }
.row { display: flex; align-items: center; }
.row svg:not(.chev) { width: 22px; height: 22px; margin: 0 3px; }
.row .sep { height: 28px; margin: 0 1px; }
.zoomrow .combo { width: 114px; margin-left: 1px; }
.combo { height: 23px; border: 1px solid #b0b0b0; border-radius: 2px; background: #fff; display: flex; align-items: center; justify-content: space-between; padding: 0 3px; letter-spacing: -.5px; }

.doctabs { height: 32px; flex: none; display: flex; background: repeating-conic-gradient(#828282 0 25%, #888 0 50%) 0 0 / 4px 4px; }
.doctab { width: 165px; background: #fcfcfc; border-radius: 0 3px 0 0; display: flex; padding: 7px 0 0 5px; position: relative; letter-spacing: -.36px; }
.doctab span { width: 137px; }
.doctab svg { width: 7px; height: 7px; margin: -2px 0 0 11px; }
.doctab::after { content: ""; position: absolute; left: 5px; right: 5px; bottom: 2px; height: 2px; background: #999; }
.tabbtn { width: 27px; height: 27px; margin: 3px 0 0 2px; background: #c9c9c9; border-radius: 2px; display: grid; place-items: center; }
.tabbtn svg { width: 15px; height: 15px; }
.tabbtn.close { margin: 1px 1px 0 auto; width: 30px; height: 29px; }

.main { flex: 1; display: flex; min-height: 0; border-top: 2px solid #fff; }
.side { width: 31px; flex: none; display: flex; flex-direction: column; background: #f3f3f3; border-bottom: 1px solid #dcdcdc; }
.side > svg { width: 23px; height: 23px; margin: 2.500px 0 2.500px 3px; }
.collapse { height: 11px; background: #e4e4e4; }
.collapse svg { width: 9px; height: 9px; margin: 1px 0 0 22px; }
.dots { display: block; background: radial-gradient(circle at 1px 1px, #aaa .8px, transparent 1px) 0 0 / 3px 3px; }
.side .dots { height: 10px; margin: 1px 3px 1px 3px; }
.side hr { width: 28px; height: 1px; margin: 0 0 1px 1px; border: 0; background: #bbb; }
.work { flex: 1; display: flex; flex-direction: column; }
.viewrow { height: 789px; display: flex; }
.canvas { width: 1874px; background: #fff; border: 1px solid #747474; position: relative; box-shadow: inset 0 0 3px #888; }
.drawing { width: 1872px; height: 787px; }
.cad { font-family: "Liberation Sans", Arial, sans-serif; fill: #000; letter-spacing: 0; }
.finder { position: absolute; right: 1px; top: 1px; width: 309px; height: 32px; background: #f3f3f3; border-radius: 3px; box-shadow: 0 1px 4px #777; display: grid; grid-template-columns: 23px 192px 22px 21px 25px 20px; align-items: center; justify-items: center; padding-left: 2px; }
.finder > svg:not(.chev) { width: 13px; height: 13px; }
.finder .cl { width: 11px; height: 11px; }
.field { width: 192px; height: 24px; background: #fff; border: 1px solid #aaa; border-radius: 2px; display: flex; align-items: center; padding: 0 3px; letter-spacing: -.2px; }
.field em { font-style: normal; color: #777; margin-left: auto; letter-spacing: 0; }
.field .red { width: 12px; height: 12px; color: #d32f2f; margin: 0 6px 0 2px; }
.vscroll { width: 15px; background: #efefef; }
.vscroll svg { width: 15px; height: 787px; margin-top: 1px; }
.hscroll { height: 15px; background: #efefef; display: grid; grid-template-columns: 500px 87px 1fr; align-items: center; }
.hscroll svg { width: 11px; height: 11px; margin-left: 2px; color: #555; }
.hscroll svg:last-child { justify-self: end; margin-right: 18px; }
.hscroll i { height: 5px; border-radius: 3px; background: #808080; }
.status { height: 31px; display: flex; align-items: center; position: relative; }
.status .sep { height: 28px; margin-left: 2px; }
.grip { width: 10px; height: 26px; margin-left: 3px; }
.grip .dots { width: 9px; height: 15px; }
.grip svg { width: 9px; height: 9px; margin-top: 1px; }
.gears { margin-left: 1px; }
.opt { width: 55px; margin-left: 3px; letter-spacing: -.3px; }
.dim1 { width: 16px; height: 16px; margin-left: 4px; }
.size { width: 76px; }
.size span, .xy span { display: block; line-height: 13px; letter-spacing: -.3px; }
.size span:last-child { padding-left: 1px; }
.cross { width: 15px; height: 15px; margin-left: 5px; }
.xy { width: 20px; margin-left: 2px; }
.grip.mid { margin-left: 550px; }
.status .ic { width: 24px; height: 24px; margin: 0 2px; }
.pageno { width: 95px; height: 23px; border: 1px solid #c4c4c4; border-radius: 2px; background: #f9f9f9; color: #777; display: flex; justify-content: flex-end; padding: 3px 4px 0 0; margin: 0 2px 0 1px; }
.pageno sup { font-size: 11px; line-height: 12px; }
.pageno i { font-size: 15px; font-style: normal; }
.grip.right { margin-left: 364px; }
.status .combo { width: 82px; margin-left: 1px; }
.slider { width: 100px; height: 24px; margin: 0 2px; }
.grip.g4 { margin-left: 3px; }
.pageon { width: 28px; height: 28px; background: #e5d1a0; border: 1px solid #b9b097; display: grid; place-items: center; }
.status .pg { margin: 0 3px 0 1px; }
.status .two { margin: 0 2px; }
.grip.g5 { margin-left: 3px; }
.acro { width: 22px; height: 22px; margin-left: 3px; }
.last { margin-left: 4px; }
.edge { margin-left: auto; width: 11px; height: 31px; background: #e8e8e8; }
.edge svg { width: 8px; height: 10px; margin: 1px 0 0 1px; }
```
